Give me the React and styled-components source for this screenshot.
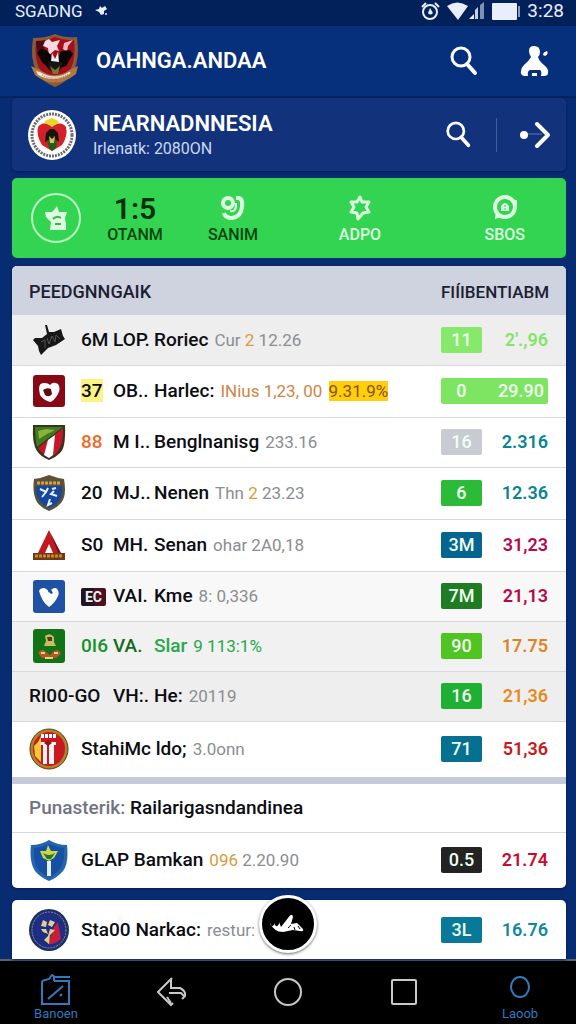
import React from "react";
import styled, { createGlobalStyle } from "styled-components";

/* theme tokens */
const navy = "#082c72";
const ink = "#0b0d12";
const muted = "#8b8d91";
const line = "#d6d8dc";
const radius = "5px";

const GlobalStyle = createGlobalStyle`
    * {
        box-sizing: border-box;
    }
    body {
        margin: 0;
        background: ${navy};
        color: ${ink};
        font-family: Roboto, "Liberation Sans", sans-serif;
    }
    button {
        appearance: none;
        border: none;
        background: none;
        padding: 0;
        color: inherit;
        font: inherit;
        cursor: pointer;
    }
    svg {
        display: block;
    }
`;

const Page = styled.div`
    display: flex;
    flex-direction: column;
    min-height: 100vh;
`;

const StatusBar = styled.div`
    display: flex;
    align-items: center;
    height: 26px;
    padding: 0 12px 4px 15px;
    background: #02205a;
    color: #e8eefb;
    font-size: 19px;
    line-height: 22px;
`;

const StatusIcons = styled.div`
    display: flex;
    align-items: center;
    gap: 7px;
    margin-left: auto;
`;

const Carrier = styled.span`
    margin-right: 12px;
    font-size: 17px;
`;

const AppBar = styled.header`
    display: flex;
    align-items: center;
    height: 72px;
    padding: 0 26px 0 28px;
    background: #06307c;
    border-bottom: 2px solid #05235f;
    color: #fff;
`;

const AppTitle = styled.h1`
    flex: 1;
    margin: 0 0 0 14px;
    font-size: 22px;
    line-height: 28px;
    font-weight: 600;
`;

const IconButton = styled.button`
    display: grid;
    place-items: center;
    width: 32px;
    height: 40px;
    color: #fff;
`;

const AppActions = styled.div`
    display: flex;
    gap: 38px;
`;

const Main = styled.main`
    flex: 1;
    padding: 0 10px 0 12px;
`;

const ClubCard = styled.section`
    display: flex;
    align-items: center;
    height: 73px;
    padding: 0 15px;
    border-radius: ${radius};
    background: #12337b;
    box-shadow: 0 1px 3px #041c50;
    color: #fff;
`;

const ClubName = styled.div`
    flex: 1;
    margin-left: 16px;
    h2 {
        margin: 0;
        font-size: 22px;
        line-height: 28px;
        font-weight: 600;
    }
    p {
        margin: 0;
        color: #ccd8f2;
        font-size: 16px;
        line-height: 22px;
    }
`;

const ClubActions = styled.div`
    display: flex;
    align-items: center;
    hr {
        width: 1px;
        height: 34px;
        margin: 0 22px;
        border: none;
        background: #3f5c9c;
    }
`;

const Stats = styled.section`
    display: grid;
    grid-template-columns: 88px 70fr 126fr 128fr 142fr;
    justify-items: center;
    align-items: center;
    height: 80px;
    margin-top: 7px;
    border-radius: ${radius};
    background: #34d453;
    color: #dcffe0;
`;

const StarButton = styled.button`
    display: grid;
    place-items: center;
    width: 50px;
    height: 50px;
    && {
        border: 2px solid #b9f7c2;
    }
    border-radius: 50%;
`;

const Stat = styled.button`
    display: grid;
    justify-items: center;
    .label {
        color: ${(p) => (p.$dark ? "#07440f" : "#dcffe0")};
        font-size: 16px;
        line-height: 20px;
        font-weight: 500;
    }
    .figure {
        display: grid;
        place-items: center;
        height: 34px;
        color: ${(p) => (p.$big ? "#05300a" : "#dcffe0")};
        font-size: 30px;
        font-weight: 600;
    }
    &:last-child {
        justify-self: end;
        margin-right: 41px;
    }
`;

const TableCard = styled.section`
    position: relative;
    margin-top: ${(p) => (p.$last ? "12px" : "8px")};
    background: #fff;
    border-radius: ${(p) => (p.$last ? "5px 5px 0 0" : radius)};
    box-shadow: 0 1px 3px #041c50;
`;

const Table = styled.table`
    width: 100%;
    table-layout: fixed;
    border-collapse: collapse;
    .badge-col {
        width: 41px;
    }
    .value-col {
        width: 84px;
    }
    th {
        height: 49px;
        padding: 2px 0 0 17px;
        background: #cfd2df;
        color: #1b2033;
        font-size: 18px;
        font-weight: 500;
        text-align: left;
        white-space: nowrap;
    }
    th:first-child {
        border-top-left-radius: ${radius};
    }
    th:last-child {
        padding: 2px 18px 0 0;
        border-top-right-radius: ${radius};
        font-size: 17px;
        text-align: right;
    }
`;

const rowHeights = { slim: 48, compact: 50, normal: 52, tall: 56, last: 59 };

const Row = styled.tr`
    height: ${(p) => rowHeights[p.$size || "normal"]}px;
    background: ${(p) => p.$bg || "transparent"};
    border-bottom: ${(p) => (p.$plain ? "none" : `1px solid ${line}`)};
    td {
        padding: 0;
        font-size: 18px;
        line-height: 24px;
        white-space: nowrap;
    }
`;

const ThickRule = styled.tr`
    height: 7px;
    background: #c6cad8;
    td {
        padding: 0;
    }
`;

const SubHeader = styled.td`
    && {
        padding: 0 17px;
        font-size: 19px;
        font-weight: 500;
    }
    span {
        color: #70747f;
    }
`;

const Team = styled.div`
    display: flex;
    align-items: center;
    padding-left: 17px;
    font-size: 19px;
`;

const Crest = styled.div`
    display: grid;
    place-items: center;
    width: 40px;
    margin-right: 12px;
`;

const Code = styled.span`
    width: ${(p) => (p.$wide ? "84px" : "32px")};
    color: ${(p) => p.$color || ink};
    font-weight: 500;
    mark {
        background: #fdf284;
        color: ${ink};
    }
`;

const Chip = styled.b`
    display: inline-block;
    width: 25px;
    border-radius: 2px;
    background: linear-gradient(90deg, #21141e 50%, #4b1022 50%);
    color: #eee;
    font-size: 14px;
    line-height: 18px;
    text-align: center;
    vertical-align: middle;
`;

const Mid = styled.span`
    width: 41px;
    color: ${(p) => p.$color || ink};
    font-weight: 500;
`;

const Name = styled.span`
    color: ${(p) => p.$color || ink};
    font-weight: 500;
`;

const Note = styled.span`
    margin-left: 6px;
    color: ${(p) => p.$color || muted};
    font-size: 17px;
    em {
        color: #d99a3c;
        font-style: normal;
    }
    mark {
        margin-left: 2px;
        background: #ffcf0d;
        color: #8a5200;
    }
`;

const Badge = styled.div`
    display: flex;
    justify-content: space-between;
    margin-right: ${(p) => (p.$wide ? "18px" : "0")};
    height: 26px;
    border-radius: 2px;
    background: ${(p) => p.$bg};
    color: #effff0;
    line-height: 26px;
    font-weight: 500;
    span {
        width: 41px;
        text-align: center;
    }
    b {
        padding-right: 4px;
        font-weight: 500;
    }
`;

const Value = styled.td`
    && {
        padding-right: 18px;
        color: ${(p) => p.$color};
        font-weight: 600;
        text-align: right;
    }
`;

const FloatButton = styled.button`
    position: absolute;
    top: -5px;
    left: 50%;
    display: grid;
    place-items: center;
    width: 58px;
    height: 58px;
    margin-left: -30px;
    && {
        border: 3px solid #fff;
        background: #000;
    }
    border-radius: 50%;
    box-shadow: 0 1px 3px rgba(0, 0, 0, 0.6);
`;

const BottomNav = styled.nav`
    display: flex;
    justify-content: space-between;
    height: 65px;
    padding: 0 28px;
    border-top: 2px solid #59636f;
    background: #000;
    color: #c9c9c9;
`;

const NavItem = styled.button`
    display: flex;
    flex-direction: column;
    align-items: center;
    justify-content: ${(p) => (p.$tab ? "flex-end" : "center")};
    gap: 1px;
    width: 56px;
    && {
        padding-bottom: 2px;
        color: ${(p) => (p.$tab ? "#3279bd" : "#c9c9c9")};
        font-size: 13px;
        line-height: 16px;
    }
`;

/* crests */
const GarudaShield = () => (
    <svg width="54" height="56" viewBox="0 0 54 56">
        <path d="M5 5Q18 5 27 1Q37 5 49 4Q52 26 46 37Q40 49 27 54Q14 49 8 38Q2 26 5 5Z" fill="#8b5a36" />
        <path d="M8 8Q19 8 27 4Q37 8 46 7Q48 25 43 35Q38 45 27 50Q16 45 11 35Q6 24 8 8Z" fill="#a30f1b" />
        <path d="M8 8Q14 8 18 7L16 18L12 25Q8 18 8 8Z" fill="#4c0b14" />
        <path d="M17 8L21 6L24 9L32 7L29 13L31 18L27 17L21 22L20 15L15 13Z" fill="#f9dbe4" />
        <path d="M36 10L45 7L40 13L39 19L35 16Z" fill="#f3b6c3" />
        <path d="M9 20L13 16L18 17L23 22L25 28L29 28L33 18L42 17L45 21L38 33L32 35L21 36L14 29Z" fill="#090606" />
        <path d="M24 20L27 26L30 19L31 29L23 28Z" fill="#eee" />
        <path d="M20 29H35L32 37L27 40L21 37Z" fill="#141810" />
        <path d="M22 33L27 37L32 33L30 41H25Z" fill="#7a7433" />
        <path d="M3 33L12 37Q27 48 43 36L50 33L48 41Q27 58 7 42Z" fill="#b1783f" />
        <path d="M8 38L12 39Q27 48 41 39L43 40Q27 51 10 42Z" fill="#f2e8de" />
        <path d="M14 42Q27 49 40 41" stroke="#80624f" strokeWidth="1" strokeDasharray="1 1" fill="none" />
    </svg>
);

const NationRoundel = () => (
    <svg width="50" height="52" viewBox="0 0 50 52">
        <ellipse cx="25" cy="26" rx="24" ry="25" fill="#fff" />
        <ellipse cx="25" cy="26" rx="20" ry="21" fill="none" stroke="#6b6b75" strokeWidth="3" strokeDasharray="2 1" />
        <circle cx="25" cy="26" r="16" fill="#fbf7ec" />
        <path d="M18 12L25 9L31 12L33 21H17Z" fill="#e9d523" />
        <path d="M11 18Q16 11 25 18Q34 11 39 18Q41 27 35 36L25 42L15 36Q9 26 11 18Z" fill="#d4202a" />
        <path d="M19 24L23 20H27L31 24L32 33L28 30L25 34L22 31L18 33Z" fill="#12160b" />
        <path d="M20 31H30L29 39L25 42L22 39Z" fill="#1d5b21" />
        <path d="M22 27L25 30L28 27L27 34H23Z" fill="#d9c24b" />
    </svg>
);

const BlackFlag = () => (
    <svg width="34" height="32" viewBox="0 0 34 32">
        <path d="M13 1L15 1L17 8L22 8L29 5L31 12L33 15L24 21L16 24L9 31L7 27L6 22L1 16L3 14L10 14L15 10Z" fill="#171717" />
        <path d="M9 18L13 16L13 24M15 14L17 20L20 12L23 18L24 11L28 15" stroke="#555" strokeWidth="1" fill="none" />
    </svg>
);

const RedHeart = () => (
    <svg width="32" height="32" viewBox="0 0 32 32">
        <rect width="32" height="32" rx="3" fill="#870916" />
        <path d="M6 14Q6 7 12 8Q15 8 17 10Q20 6 25 9Q28 13 25 19Q21 26 17 27Q10 25 7 20Z" fill="#fff" />
        <path d="M10 15Q14 12 18 14L19 19Q16 23 12 20Z" fill="#5f0c14" />
    </svg>
);

const TricolorShield = () => (
    <svg width="34" height="36" viewBox="0 0 34 36">
        <path d="M1 1H33Q34 24 28 29Q23 34 17 36Q9 33 5 27Q0 20 1 1Z" fill="#34351d" />
        <path d="M3 3H31L5 23Q3 15 3 3Z" fill="#3f7a1e" />
        <path d="M6 7L14 5L23 6L15 10L7 15Z" fill="#8bb23b" />
        <path d="M31 4L6 24Q9 29 15 32L19 33Q32 27 31 4Z" fill="#c5162b" />
        <path d="M16 16L23 11L21 31L17 34L12 31Z" fill="#fff" />
    </svg>
);

const BlueShield = () => (
    <svg width="34" height="38" viewBox="0 0 34 38">
        <path d="M2 5Q10 4 17 1Q25 4 32 5Q35 22 29 29Q25 34 17 37Q8 33 5 28Q0 20 2 5Z" fill="#5a5137" />
        <path d="M4 12H30Q31 22 27 27Q23 32 17 34Q10 31 7 26Q3 20 4 12Z" fill="#16479b" />
        <path d="M5 9H29" stroke="#d0a34e" strokeWidth="3" strokeDasharray="3 1" />
        <path d="M8 15L14 18L16 14M14 18L10 23M20 15L24 14M22 17L19 20L25 22M18 25L16 31L20 29" stroke="#e8f1fb" strokeWidth="2" fill="none" />
    </svg>
);

const RedTent = () => (
    <svg width="34" height="32" viewBox="0 0 34 32">
        <path d="M17 1L29 26H5Z" fill="#c01a20" />
        <path d="M17 1L19 5L27 26H30Z" fill="#6c1414" />
        <path d="M17 15L21 24H13Z" fill="#fff" />
        <rect x="1" y="24" width="32" height="7" fill="#6a3a1a" />
        <path d="M3 27H31" stroke="#d1862c" strokeWidth="3" strokeDasharray="3 1" />
    </svg>
);

const BlueHeart = () => (
    <svg width="32" height="33" viewBox="0 0 32 33">
        <rect width="32" height="33" rx="3" fill="#1f52a5" />
        <path d="M6 11Q7 8 11 8Q15 9 16 13Q18 8 23 8Q27 11 25 16Q22 23 16 27Q9 22 6 11Z" fill="#fff" />
        <path d="M17 8L20 13L18 14L15 11Z" fill="#1f52a5" />
    </svg>
);

const GreenCrest = () => (
    <svg width="32" height="34" viewBox="0 0 32 34">
        <rect width="32" height="34" rx="3" fill="#127316" />
        <path d="M12 7Q17 3 21 8V13L23 17H11L13 12Z" fill="#c9bd63" />
        <path d="M14 8H19V12H15Z" fill="#523c1c" />
        <path d="M5 24Q9 18 13 23L17 26L21 22Q26 19 28 25L23 29H9Z" fill="#b3572a" />
        <path d="M8 24H12M21 24H25M12 29H20" stroke="#ead47a" strokeWidth="2" />
    </svg>
);

const StripeRoundel = () => (
    <svg width="40" height="42" viewBox="0 0 40 42">
        <ellipse cx="20" cy="21" rx="19" ry="20" fill="#b08326" stroke="#5f3c1d" />
        <ellipse cx="20" cy="21" rx="16" ry="17" fill="#c81822" />
        <path d="M9 14L12 8V34L6 28L5 18Z" fill="#f0ca34" />
        <path d="M12 14H27V17H25V36H20V17H18V36H14V17H11Z" fill="#fff4ef" />
        <path d="M12 8H28" stroke="#fff" strokeWidth="4" strokeDasharray="3 1" />
        <path d="M15 15L19 12L23 15L19 18Z" fill="#9b111c" />
    </svg>
);

const PalmShield = () => (
    <svg width="38" height="42" viewBox="0 0 38 42">
        <path d="M1 6Q11 6 19 1Q27 6 37 6Q39 24 33 32Q27 39 19 42Q10 38 5 32Q-1 23 1 6Z" fill="#2466ac" />
        <path d="M4 9Q13 8 19 5Q26 8 34 9Q35 23 30 30Q25 36 19 38Q12 35 8 30Q3 23 4 9Z" fill="#174fa5" />
        <path d="M10 12L16 12L18 6L21 12L28 12L24 19L19 22L13 19Z" fill="#cbd547" />
        <path d="M13 14Q19 18 25 14L21 20H17Z" fill="#277330" />
        <path d="M17 22H21V37H17Z" fill="#e5f1ee" />
    </svg>
);

const NavyRoundel = () => (
    <svg width="40" height="42" viewBox="0 0 40 42">
        <ellipse cx="20" cy="21" rx="20" ry="21" fill="#1d315f" />
        <ellipse cx="20" cy="21" rx="17" ry="18" fill="#202d84" stroke="#8190af" strokeWidth="1" strokeDasharray="2 1" />
        <path d="M25 18L29 13L32 30Q26 36 19 35Z" fill="#c52037" />
        <path d="M14 11L18 13L17 18L12 17ZM21 11L26 13L23 18L19 16ZM12 20L17 20L19 25L14 23ZM21 20L26 21L21 26L20 35L15 31L19 27Z" fill="#e1cf92" />
    </svg>
);

/* glyphs */
const SearchIcon = ({ size }) => (
    <svg width={size} height={size} viewBox="0 0 28 30" fill="none" stroke="currentColor">
        <circle cx="11" cy="11" r="9" strokeWidth="3" />
        <path d="M17 18L25 27" strokeWidth="4" strokeLinecap="round" />
    </svg>
);

const PersonIcon = () => (
    <svg width="29" height="32" viewBox="0 0 29 32" fill="currentColor">
        <path d="M9 6Q9 1 14 1Q20 1 20 7Q20 10 18 12Q19 16 24 20Q29 24 28 28Q28 31 24 31H21Q22 26 20 25H10Q7 26 8 31H4Q0 30 1 26Q1 23 4 20Q9 16 11 12Q9 9 9 6Z" />
        <path d="M12 31V28H17V31ZM23 10Q23 7 27 6Q29 9 25 11Z" />
    </svg>
);

const ArrowIcon = () => (
    <svg width="32" height="28" viewBox="0 0 32 28" fill="none" stroke="currentColor">
        <circle cx="5" cy="14" r="4" fill="currentColor" stroke="none" />
        <path d="M9 13H23" stroke="#5f78b1" strokeWidth="1" />
        <path d="M18 3L29 14L18 25" strokeWidth="4" strokeLinecap="round" strokeLinejoin="round" />
    </svg>
);

const AlarmIcon = () => (
    <svg width="19" height="19" viewBox="0 0 19 19" fill="none" stroke="currentColor" strokeWidth="2">
        <circle cx="9" cy="10" r="7" />
        <path d="M1 5L5 1M18 5L14 1" />
        <path d="M9 6L12 11Q9 14 7 11Z" fill="currentColor" stroke="none" />
    </svg>
);

const WifiSignalIcon = () => (
    <svg width="38" height="18" viewBox="0 0 38 18" fill="currentColor">
        <path d="M0 4Q10 -3 21 4L11 18Z" />
        <path d="M22 17L27 12V17Z" />
        <path d="M28 17V8L31 5V17Z" opacity="0.85" />
        <path d="M33 17V3L37 0V17Z" opacity="0.55" />
    </svg>
);

const BatteryIcon = () => (
    <svg width="28" height="17" viewBox="0 0 28 17" fill="currentColor">
        <rect width="25" height="17" rx="1" />
        <path d="M26 3H28V14H26Z" opacity="0.6" />
    </svg>
);

const BirdIcon = () => (
    <svg width="14" height="12" viewBox="0 0 14 12" fill="currentColor">
        <path d="M0 5L4 4L5 1L7 3L10 1L12 4L9 6L9 9L6 10L4 7Z" />
        <circle cx="11" cy="9" r="1" />
    </svg>
);

const StarBadgeIcon = () => (
    <svg width="24" height="26" viewBox="0 0 24 26">
        <path d="M1 7L8 7L10 5L13 1L15 7L23 7L21 13L22 20L22 25H6L7 17L2 12Z" fill="#dcffe0" />
        <path d="M9 14Q13 10 17 13M11 19H17" stroke="#34b64d" strokeWidth="2" fill="none" />
    </svg>
);

const HexStarIcon = () => (
    <svg width="22" height="26" viewBox="0 0 22 26" fill="none" stroke="currentColor" strokeWidth="3" strokeLinejoin="round">
        <path d="M11 2L13 7L20 7L17 12L20 17L14 18L9 24L8 18L2 17L5 12L2 7L8 7Z" />
    </svg>
);

const LockBubbleIcon = () => (
    <svg width="26" height="26" viewBox="0 0 26 26" fill="none" stroke="currentColor">
        <circle cx="13" cy="12" r="10" strokeWidth="4" />
        <path d="M4 16L3 24L10 22ZM20 5H25V12Z" fill="currentColor" stroke="none" />
        <path d="M9 16V11Q13 5 17 11V16Z" fill="currentColor" stroke="none" />
        <path d="M12 11H14M12 14H14" stroke="#34d453" strokeWidth="1" />
    </svg>
);

const SwirlIcon = () => (
    <svg width="24" height="26" viewBox="0 0 24 26" fill="none" stroke="currentColor" strokeWidth="4">
        <circle cx="7" cy="8" r="5" />
        <path d="M15 3H18Q22 4 21 12Q20 22 11 23Q4 23 3 18" />
        <path d="M15 8V12Q14 17 9 16" strokeWidth="2" />
    </svg>
);

const ShoeIcon = () => (
    <svg width="36" height="24" viewBox="0 0 36 24" fill="#fff">
        <path d="M0 11Q1 16 4 13L4 11Q6 17 9 12L9 10L11 15L18 6Q22 0 23 5L21 12L27 11L33 17Q34 20 30 19L23 18L13 20Q4 20 0 11Z" />
        <path d="M18 16L21 13M24 15L25 18M28 14L30 17" stroke="#000" />
    </svg>
);

const NewsIcon = () => (
    <svg width="30" height="31" viewBox="0 0 30 31" fill="none" stroke="currentColor" strokeWidth="2">
        <path d="M1 7L8 5L11 1L14 3H29M13 7H28V30H1V7M13 7V3" />
        <path d="M7 25L22 12M19 22L21 20" />
    </svg>
);

const BackIcon = () => (
    <svg width="30" height="30" viewBox="0 0 30 30" fill="none" stroke="currentColor" strokeWidth="2">
        <path d="M15 1L1 15L14 28L16 26" />
        <path d="M14 2V11M13 11H23Q29 14 28 19L25 22" />
        <path d="M12 16H24L27 19M10 20L14 26" />
    </svg>
);

const HomeIcon = () => (
    <svg width="30" height="30" viewBox="0 0 30 30" fill="none" stroke="currentColor" strokeWidth="2">
        <circle cx="15" cy="15" r="13" />
    </svg>
);

const SquareIcon = () => (
    <svg width="28" height="28" viewBox="0 0 28 28" fill="none" stroke="currentColor" strokeWidth="2">
        <rect x="2" y="2" width="24" height="24" rx="1" />
    </svg>
);

const RingIcon = () => (
    <svg width="22" height="29" viewBox="0 0 22 29" fill="none" stroke="currentColor" strokeWidth="2">
        <ellipse cx="11" cy="11" rx="9" ry="10" />
    </svg>
);

const teams = [
    { crest: BlackFlag, code: "6M", mid: "LOP.", name: "Roriec", note: <>Cur <em>2</em> 12.26</>, badge: "11", badgeBg: "#87e96c", value: "2'.,96", color: "#85e467", size: "compact", bg: "#eeeeee" },
    { crest: RedHeart, code: <mark>37</mark>, mid: "OB..", name: "Harlec:", note: <>INius 1,23, 00 <mark>9.31.9%</mark></>, noteColor: "#cf8446", badge: "0", badgeBg: "#7ee563", value: "29.90", merged: true },
    { crest: TricolorShield, code: "88", codeColor: "#ee6a2b", mid: "M I..", name: "Benglnanisg", note: "233.16", badge: "16", badgeBg: "#c9cbd3", value: "2.316", color: "#0b8496", size: "compact" },
    { crest: BlueShield, code: "20", mid: "MJ..", name: "Nenen", note: <>Thn <em>2</em> 23.23</>, badge: "6", badgeBg: "#2cba39", value: "12.36", color: "#0b8496" },
    { crest: RedTent, code: "S0", mid: "MH.", name: "Senan", note: "ohar 2A0,18", badge: "3M", badgeBg: "#066590", value: "31,23", color: "#b30b49" },
    { crest: BlueHeart, code: <Chip>EC</Chip>, mid: "VAI.", name: "Kme", note: "8: 0,336", badge: "7M", badgeBg: "#207c22", value: "21,13", color: "#b30b49", size: "compact", bg: "#f8f8f8" },
    { crest: GreenCrest, code: "0I6", codeColor: "#159428", mid: "VA.", midColor: "#136b20", name: "Slar", nameColor: "#27a84c", note: "9 113:1%", noteColor: "#27a84c", badge: "90", badgeBg: "#50c522", value: "17.75", color: "#e08324", size: "compact", bg: "#f1f1f1" },
    { code: "RI00-GO", mid: "VH:.", name: "He:", note: "20119", badge: "16", badgeBg: "#1fb033", value: "21,36", color: "#e78b1e", size: "compact", bg: "#eeeeee" },
    { crest: StripeRoundel, name: "StahiMc ldo;", note: "3.0onn", badge: "71", badgeBg: "#05708f", value: "51,36", color: "#c8191d", size: "tall", plain: true },
];

const playoffs = [
    { crest: PalmShield, name: "GLAP Bamkan", note: <><em>096</em> 2.20.90</>, badge: "0.5", badgeBg: "#232323", value: "21.74", color: "#c30d30", size: "tall", plain: true },
];

const nextUp = [
    { crest: NavyRoundel, name: "Sta00 Narkac:", note: "restur:", badge: "3L", badgeBg: "#09799a", value: "16.76", color: "#1389a1", size: "last", plain: true },
];

const Columns = () => (
    <colgroup>
        <col />
        <col className="badge-col" />
        <col className="value-col" />
    </colgroup>
);

function TeamRow({ team }) {
    const CrestArt = team.crest;
    return (
        <Row $size={team.size} $bg={team.bg} $plain={team.plain}>
            <td>
                <Team>
                    {CrestArt && (
                        <Crest>
                            <CrestArt />
                        </Crest>
                    )}
                    {team.code && (
                        <Code $wide={!CrestArt} $color={team.codeColor}>
                            {team.code}
                        </Code>
                    )}
                    {team.mid && <Mid $color={team.midColor}>{team.mid}</Mid>}
                    <Name $color={team.nameColor}>{team.name}</Name>
                    <Note $color={team.noteColor}>{team.note}</Note>
                </Team>
            </td>
            <td colSpan={team.merged ? 2 : 1}>
                <Badge $bg={team.badgeBg} $wide={team.merged}>
                    <span>{team.badge}</span>
                    {team.merged && <b>{team.value}</b>}
                </Badge>
            </td>
            {!team.merged && <Value $color={team.color}>{team.value}</Value>}
        </Row>
    );
}

export default function App() {
    return (
        <Page>
            <GlobalStyle />
            <StatusBar>
                <Carrier>SGADNG</Carrier>
                <BirdIcon />
                <StatusIcons>
                    <AlarmIcon />
                    <WifiSignalIcon />
                    <BatteryIcon />
                    <span>3:28</span>
                </StatusIcons>
            </StatusBar>

            <AppBar>
                <GarudaShield />
                <AppTitle>OAHNGA.ANDAA</AppTitle>
                <AppActions>
                    <IconButton aria-label="Search">
                        <SearchIcon size={30} />
                    </IconButton>
                    <IconButton aria-label="Profile">
                        <PersonIcon />
                    </IconButton>
                </AppActions>
            </AppBar>

            <Main>
                <ClubCard>
                    <NationRoundel />
                    <ClubName>
                        <h2>NEARNADNNESIA</h2>
                        <p>Irlenatk: 2080ON</p>
                    </ClubName>
                    <ClubActions>
                        <IconButton aria-label="Search club">
                            <SearchIcon size={27} />
                        </IconButton>
                        <hr />
                        <IconButton aria-label="Open club">
                            <ArrowIcon />
                        </IconButton>
                    </ClubActions>
                </ClubCard>

                <Stats>
                    <StarButton aria-label="Favourite">
                        <StarBadgeIcon />
                    </StarButton>
                    <Stat $dark $big>
                        <span className="figure">1:5</span>
                        <span className="label">OTANM</span>
                    </Stat>
                    <Stat $dark>
                        <span className="figure">
                            <SwirlIcon />
                        </span>
                        <span className="label">SANIM</span>
                    </Stat>
                    <Stat>
                        <span className="figure">
                            <HexStarIcon />
                        </span>
                        <span className="label">ADPO</span>
                    </Stat>
                    <Stat>
                        <span className="figure">
                            <LockBubbleIcon />
                        </span>
                        <span className="label">SBOS</span>
                    </Stat>
                </Stats>

                <TableCard>
                    <Table>
                        <Columns />
                        <thead>
                            <tr>
                                <th>PEEDGNNGAIK</th>
                                <th colSpan={2}>FIÍIBENTIABM</th>
                            </tr>
                        </thead>
                        <tbody>
                            {teams.map((team) => (
                                <TeamRow key={team.name} team={team} />
                            ))}
                            <ThickRule>
                                <td colSpan={3} />
                            </ThickRule>
                            <Row $size="slim">
                                <SubHeader colSpan={3}>
                                    <span>Punasterik:</span> Railarigasndandinea
                                </SubHeader>
                            </Row>
                            {playoffs.map((team) => (
                                <TeamRow key={team.name} team={team} />
                            ))}
                        </tbody>
                    </Table>
                </TableCard>

                <TableCard $last>
                    <Table>
                        <Columns />
                        <tbody>
                            {nextUp.map((team) => (
                                <TeamRow key={team.name} team={team} />
                            ))}
                        </tbody>
                    </Table>
                    <FloatButton aria-label="Quick action">
                        <ShoeIcon />
                    </FloatButton>
                </TableCard>
            </Main>

            <BottomNav>
                <NavItem $tab>
                    <NewsIcon />
                    Banoen
                </NavItem>
                <NavItem aria-label="Back">
                    <BackIcon />
                </NavItem>
                <NavItem aria-label="Home">
                    <HomeIcon />
                </NavItem>
                <NavItem aria-label="Recent apps">
                    <SquareIcon />
                </NavItem>
                <NavItem $tab>
                    <RingIcon />
                    Laoob
                </NavItem>
            </BottomNav>
        </Page>
    );
}
